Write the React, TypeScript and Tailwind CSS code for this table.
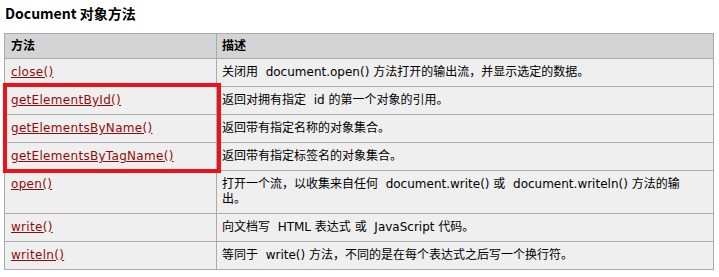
import React from "react";

interface MethodRow {
  name: string;
  desc: React.ReactNode;
}

const rows: MethodRow[] = [
  {
    name: "close()",
    desc: <>关闭用{"\u00a0\u00a0"}document.open() 方法打开的输出流，并显示选定的数据。</>,
  },
  { name: "getElementById()", desc: <>返回对拥有指定{"\u00a0\u00a0"}id 的第一个对象的引用。</> },
  { name: "getElementsByName()", desc: <>返回带有指定名称的对象集合。</> },
  { name: "getElementsByTagName()", desc: <>返回带有指定标签名的对象集合。</> },
  {
    name: "open()",
    desc: (
      <>
        打开一个流，以收集来自任何{"\u00a0\u00a0"}document.write() 或{"\u00a0\u00a0"}document.writeln() 方法的输
        <br />
        出。
      </>
    ),
  },
  { name: "write()", desc: <>向文档写{"\u00a0\u00a0"}HTML 表达式{"\u00a0"}或{"\u00a0\u00a0"}JavaScript 代码。</> },
  { name: "writeln()", desc: <>等同于{"\u00a0\u00a0"}write() 方法，不同的是在每个表达式之后写一个换行符。</> },
];

const font = "font-['DejaVu_Sans','Noto_Sans_CJK_SC',sans-serif]";

const App: React.FC = () => {
  return (
    <div className={`relative w-[719px] h-[277px] bg-white text-black ${font}`}>
      {/* 标题 */}
      <div className="pt-[3px] pl-[5px] mb-[10px] text-[14px] leading-[20px] font-bold font-['Noto_Sans_CJK_SC',sans-serif]">
        Document 对象方法
      </div>

      <table className="ml-[4px] w-[710px] table-fixed border-collapse text-[12px] leading-[15px]">
        <colgroup>
          <col className="w-[212px]" />
          <col />
        </colgroup>
        <thead>
          <tr className="bg-[#d4d4d4]">
            <th className="border border-[#aaaaaa] pl-[6px] pt-[5px] pb-[4px] text-left font-bold">方法</th>
            <th className="border border-[#aaaaaa] pl-[5px] pt-[5px] pb-[4px] text-left font-bold">描述</th>
          </tr>
        </thead>
        <tbody>
          {rows.map((row, index) => (
            <tr key={index} className="bg-[#efefef]">
              <td className="border border-[#aaaaaa] pl-[6px] py-[6px] align-top">
                <a href="#" className="text-[#900b09] underline tracking-[0.3px]">
                  {row.name}
                </a>
              </td>
              <td className="border border-[#aaaaaa] pl-[5px] pr-[6px] py-[6px] align-top">{row.desc}</td>
            </tr>
          ))}
        </tbody>
      </table>

      {/* 红色标注框 */}
      <div className="absolute left-[3px] top-[83px] w-[218px] h-[90px] border-4 border-[#e8141c]" />
    </div>
  );
};

export default App;
